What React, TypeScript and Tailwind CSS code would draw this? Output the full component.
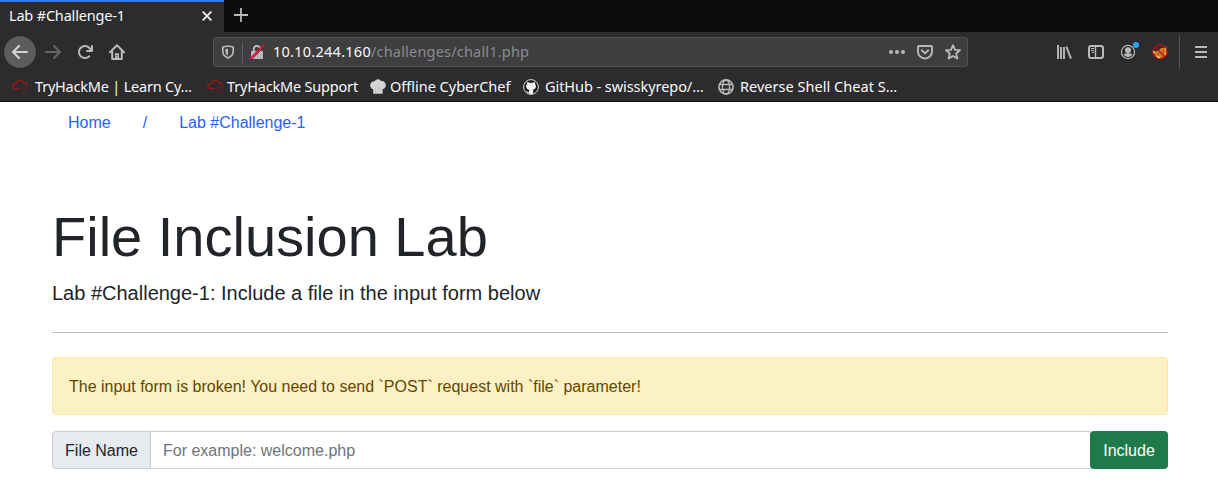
import React from "react";

const ui = "font-['Noto_Sans','Open_Sans',sans-serif]";

function Icon({ children, className = "size-4", viewBox = "0 0 16 16" }: { children: React.ReactNode; className?: string; viewBox?: string }) {
  return (
    <svg viewBox={viewBox} className={`block shrink-0 ${className}`} fill="none" stroke="currentColor">
      {children}
    </svg>
  );
}

const arrow =
  "M15 7H3.414l4.293-4.293a1 1 0 0 0-1.414-1.414l-6 6a1 1 0 0 0 0 1.414l6 6a1 1 0 0 0 1.414-1.414L3.414 9H15a1 1 0 0 0 0-2z";

function ThmIcon() {
  return (
    <Icon className="size-4 text-[#b01216]">
      <path d="M7.500 9.500H2.800A2.400 2.400 0 0 1 2.600 4.800Q3.200 4.400 4.200 4.600A3.900 3.900 0 0 1 11.600 3.800Q15 3.600 15.300 7.200" strokeWidth="1.200" />
      <path d="M9.500 8.500h2M12.500 8.500h3M9 10.500h3M13 10.500h2M9.500 13.500h2M11 15h2.500M13.500 13.500h2" strokeWidth="1" opacity=".55" />
    </Icon>
  );
}

function ChefIcon() {
  return (
    <Icon className="size-4">
      <path d="M3.200 14.800V10.300A4 4 0 0 1 1 4 3.400 3.400 0 0 1 4.600 2.200a4 4 0 0 1 6.600-.2 3.500 3.500 0 0 1 4 2.300A4 4 0 0 1 12.600 10.300V14.800z" fill="#d5d5d5" stroke="none" />
      <path d="M5.500 8v6M8 7v7M10.500 8v6" stroke="#c0c0c0" strokeWidth=".7" />
    </Icon>
  );
}

function GithubIcon() {
  return (
    <Icon className="size-4">
      <circle cx="8" cy="8" r="7.400" fill="#1b1f23" stroke="#d8d8d8" strokeWidth="1" />
      <path
        d="M4.100 3c1 0 1.700.5 2.200.9a7 7 0 0 1 3.400 0c.5-.4 1.200-.9 2.200-.9.3.8.2 1.500.1 1.900.6.7.9 1.400.9 2.300 0 2.400-1.400 3.300-3.200 3.600.4.4.5.9.5 1.500V15H5.800v-1.400c-1.800.3-2-.8-2.700-1.300 1.200-.2 1.500 1 2.700.6 0-.8.2-1.600.6-2.100-1.900-.3-3.300-1.200-3.300-3.600 0-.9.3-1.600.9-2.300-.1-.4-.2-1.100.1-1.900z"
        fill="#f2f2f2"
        stroke="none"
      />
    </Icon>
  );
}

function GlobeIcon() {
  return (
    <Icon className="size-4 text-[#b9b9ba]">
      <circle cx="8" cy="8" r="7.100" strokeWidth="1.600" />
      <ellipse cx="8" cy="8" rx="3.600" ry="7" strokeWidth="1.300" />
      <path d="M1.500 5.500h13M1.500 10.500h13" strokeWidth="1.300" />
    </Icon>
  );
}

const bookmarks = [
  { label: "TryHackMe | Learn Cy…", icon: <ThmIcon />, box: "w-[195px]", gap: "gap-[7px]", track: "tracking-[-0.21px]" },
  { label: "TryHackMe Support", icon: <ThmIcon />, box: "w-[163px]", gap: "gap-1", track: "tracking-[-0.19px]" },
  { label: "Offline CyberChef", icon: <ChefIcon />, box: "w-[153px]", gap: "gap-1", track: "tracking-[-0.01px]" },
  { label: "GitHub - swisskyrepo/…", icon: <GithubIcon />, box: "w-[195px]", gap: "gap-[6px]", track: "tracking-[-0.06px]" },
  { label: "Reverse Shell Cheat S…", icon: <GlobeIcon />, box: "w-[195px]", gap: "gap-[6px]", track: "tracking-[0.03px]" },
];

function Browser() {
  return (
    <header className={`h-[102px] border-b border-[#0c0c0d] bg-[#2c2c2e] text-[14.5px] text-[#f9f9fa] ${ui}`}>
      <div className="flex h-8 bg-[#0c0c0d]">
        <div className="flex h-8 w-[224px] items-center justify-between border-t-2 border-[#3377f6] bg-[#2c2c2e] pr-3 pb-[2px] pl-[9px]">
          <span className="tracking-[-0.18px] whitespace-nowrap">Lab #Challenge-1</span>
          <Icon className="size-[10px]" viewBox="0 0 10 10">
            <path d="M.7.7l8.600 8.600M9.300.7L.7 9.300" strokeWidth="1.700" />
          </Icon>
        </div>
        <div className="flex flex-1 items-center pb-[2px] pl-[10px] text-[#b9b9ba]">
          <Icon className="size-[14px]" viewBox="0 0 14 14">
            <path d="M7 0v14M0 7h14" strokeWidth="1.800" />
          </Icon>
        </div>
      </div>

      <nav className="flex h-10 items-center text-[#b9b9ba]">
        <div className="ml-1 flex size-8 items-center justify-center rounded-full bg-[#5c5c5d] text-[#d6d6d6] shadow-[0_0_0_1px_#242425]">
          <Icon><path d={arrow} fill="currentColor" stroke="none" /></Icon>
        </div>
        <Icon className="ml-[9px] size-4 rotate-180 text-[#656566]"><path d={arrow} fill="currentColor" stroke="none" /></Icon>
        <Icon className="ml-4 size-4">
          <path
            d="M15 1a1 1 0 0 0-1 1v2.418A6.995 6.995 0 1 0 8 15a6.954 6.954 0 0 0 4.950-2.050 1 1 0 0 0-1.414-1.414A5.019 5.019 0 1 1 12.549 6H10a1 1 0 0 0 0 2h5a1 1 0 0 0 1-1V2a1 1 0 0 0-1-1z"
            fill="currentColor"
            stroke="none"
          />
        </Icon>
        <Icon className="ml-4 size-4">
          <path d="M1 8.300L8 1.300l7 7M3.200 7v8h9.600V7" strokeWidth="2" strokeLinecap="round" strokeLinejoin="round" />
          <path d="M6 15V9.200h4V15z" fill="currentColor" stroke="none" />
          <path d="M8 11v1.500" stroke="#2c2c2e" strokeWidth="1.200" />
        </Icon>

        <div className="ml-[88px] flex h-[30px] w-[755px] items-center rounded-[3px] border border-[#545456] bg-[#3e3e40] pl-[7px]">
          <Icon className="size-[14px]" viewBox="0 0 14 14">
            <path d="M7 1L12.200 2V6.500c0 3-1.900 5-5.200 6.500C3.700 11.500 1.800 9.500 1.800 6.500V2z" strokeWidth="1.600" strokeLinejoin="round" />
            <path d="M7 3.600v6.900C5.200 9.500 4.400 8.200 4.400 6.300V4.100z" fill="currentColor" stroke="none" />
          </Icon>
          <div className="ml-[7px] h-[21px] w-px bg-[#5a5f66]" />
          <Icon className="ml-[6px] size-4">
            <rect x="2" y="7" width="12" height="8" rx="1" fill="currentColor" stroke="none" />
            <path d="M4.700 8V5.200a3.300 3.300 0 0 1 6.600 0V8" strokeWidth="2" />
            <path d="M2.500 15.900L15.200 2.500" stroke="#3e3e40" strokeWidth="1" />
            <path d="M1.500 14.700L14.500 1.300" stroke="#ee0a3c" strokeWidth="1.900" strokeLinecap="round" />
          </Icon>
          <span className="ml-2 whitespace-nowrap text-[#8b8b8d]">
            <span className="tracking-[0.26px] text-[#f9f9fa]">10.10.244.160</span>
            <span className="tracking-[0.19px]">/challenges/chall1.php</span>
          </span>
          <div className="mr-[6px] ml-auto flex items-center gap-3">
            <Icon>
              <g fill="currentColor" stroke="none"><circle cx="2" cy="8" r="2" /><circle cx="8" cy="8" r="2" /><circle cx="14" cy="8" r="2" /></g>
            </Icon>
            <Icon>
              <path d="M2 2h12a1 1 0 0 1 1 1v4.500a7 7 0 0 1-14 0V3a1 1 0 0 1 1-1z" strokeWidth="1.900" />
              <path d="M4.800 6.300L8 9.400l3.200-3.100" strokeWidth="1.900" strokeLinecap="round" strokeLinejoin="round" />
            </Icon>
            <Icon>
              <path d="M8 1.200l2 4.600 5 .4-3.800 3.300 1.200 5L8 11.900l-4.400 2.600 1.200-5L1 6.200l5-.4z" strokeWidth="1.800" strokeLinejoin="round" />
            </Icon>
          </div>
        </div>

        <Icon className="ml-[88px] size-4">
          <path d="M2 1v14M5 3v12M8 3v12" strokeWidth="1.900" />
          <path d="M10.300 2.500L15 14.600" strokeWidth="1.900" />
        </Icon>
        <Icon className="ml-4 size-4">
          <rect x="1" y="2" width="14" height="12" rx="2" strokeWidth="2" />
          <path d="M7.500 2v12" strokeWidth="1.400" />
          <path d="M3 4.500h3M3 6.500h3M4 8.500h2" strokeWidth="1" />
        </Icon>
        <div className="relative ml-4">
          <Icon>
            <circle cx="8" cy="8" r="6.600" strokeWidth="1.200" />
            <circle cx="8" cy="6.300" r="3" fill="currentColor" stroke="none" />
            <path d="M3.500 10.300Q8 8.300 12.500 10.300A5.200 5.200 0 0 1 3.500 10.300z" fill="currentColor" stroke="none" />
          </Icon>
          <span className="absolute -top-[2px] left-[13px] size-[6px] rounded-full bg-[#28a4ff]" />
        </div>
        <Icon className="ml-4 size-4">
          <path d="M1.500 8L6.500 6.500 9 4l5-.5L15 8l-2 4-5 2.800-4.500-2z" fill="#d97a1e" stroke="none" />
          <path d="M.6 6.500l2.200.8-.5 2.700-1.500-1zM13 2.300l2 1.700v3l-1.500-1z" fill="#f2ece4" stroke="none" />
          <path d="M5 13l1.500-1 1.500 1.500-1 1zM13.500 9l1.500-.5-1.500 4z" fill="#e8ddd0" stroke="none" />
          <path d="M6 9.500l1 .8M10.800 7.500l1.200-.4" stroke="#4a2a1b" />
          <circle cx="8" cy="8" r="7.200" stroke="#b60d10" strokeWidth="1.200" />
          <path d="M3 3l10 10" stroke="#b60d10" strokeWidth="1.200" />
        </Icon>
        <div className="ml-[11px] h-[34px] w-px bg-[#545456]" />
        <Icon className="ml-[13px] size-4">
          <path d="M2 3h12M2 8h12M2 13h12" strokeWidth="2" />
        </Icon>
      </nav>

      <div className="flex h-[29px] items-center pl-3">
        {bookmarks.map((b) => (
          <div key={b.label} className={`flex items-center whitespace-nowrap ${b.box} ${b.gap}`}>
            {b.icon}
            <span className={b.track}>{b.label}</span>
          </div>
        ))}
      </div>
    </header>
  );
}

export default function App() {
  return (
    <div className="h-[490px] w-[1218px] overflow-hidden bg-white font-['Liberation_Sans',Arial,sans-serif] text-base text-[#212529]">
      <Browser />
      <main className="pr-[50px] pl-[52px]">
        <div className="flex gap-8 px-4 pt-[9px] pb-[7px] text-[#2563f5]">
          <a>Home</a>
          <span>/</span>
          <a>Lab #Challenge-1</a>
        </div>
        <h1 className="mt-[61px] text-[56px] leading-[67px]">File Inclusion Lab</h1>
        <p className="mt-2 text-xl leading-[30px]">Lab #Challenge-1: Include a file in the input form below</p>
        <hr className="mt-6 border-t border-[#bfc0c2]" />
        <div className="mt-6 flex h-[58px] items-center rounded border border-[#fde6a0] bg-[#fcf0c5] px-4 pt-[2px] text-[#614700]">
          The input form is broken! You need to send `POST` request with `file` parameter!
        </div>
        <form className="mt-4 flex h-[38px]">
          <label className="flex w-[99px] items-center justify-center rounded-l border border-[#c7ccd3] bg-[#e7eaee] pt-[2px]">File Name</label>
          <input className="min-w-0 flex-1 border-y border-[#c7ccd3] px-3 pt-[2px] placeholder:text-[#6c757d]" placeholder="For example: welcome.php" />
          <button type="button" className="w-[78px] rounded bg-[#1e7b49] pt-[2px] text-white">Include</button>
        </form>
      </main>
    </div>
  );
}
